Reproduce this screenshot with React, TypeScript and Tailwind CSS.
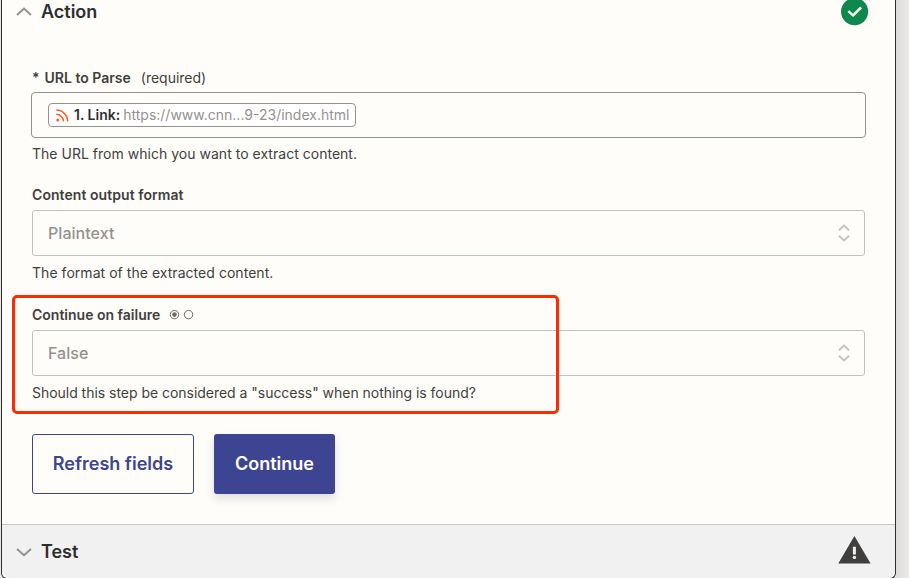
import type { ReactNode } from "react";

function Chevron({ up = false }: { up?: boolean }) {
  return (
    <svg width="16" height="10" viewBox="0 0 16 10" fill="none" stroke="#95928e" strokeWidth="2">
      <path d={up ? "M1 8 8 1.6l7 6.4" : "M1 2.1 8 8.2l7-6.1"} />
    </svg>
  );
}

function Help({ children }: { children: ReactNode }) {
  return <p className="h-5 text-[14px] leading-5 text-[#403f3e]">{children}</p>;
}

function SelectBox({ value }: { value: string }) {
  return (
    <div className="flex h-[46px] w-[833px] items-center justify-between rounded-[3px] border border-[#c4c2be] pl-[15px] pr-[14px] text-[16px] font-medium text-[#95928e]">
      <span className="tracking-[0.04px]">{value}</span>
      <svg width="12" height="18" viewBox="0 0 12 18" fill="none" stroke="#c7c5c1" strokeWidth="2">
        <path d="M1 6.2 6 1.6l5 4.6M1 11.8l5 4.6 5-4.6" />
      </svg>
    </div>
  );
}

export default function App() {
  return (
    <div className="relative h-[578px] w-[909px] overflow-hidden bg-[#e8e7e4] pl-px font-['Inter',sans-serif]">
      <div className="absolute left-[896px] top-0 h-full w-[13px] bg-linear-to-r from-[#dddcd9] to-[#ebeae9]" />
      <main className="flex h-[579px] w-[895px] flex-col overflow-hidden rounded-b-[6px] border-x border-b border-[#2d2e2e] bg-[#fffdf9]">
        <header className="flex h-6 shrink-0 items-center pl-[14px] pr-[26px]">
          <Chevron up />
          <h2 className="ml-[9px] text-[18px] font-semibold leading-6 text-[#2d2e2e]">Action</h2>
          <svg className="ml-auto" width="28" height="28" viewBox="0 0 28 28">
            <circle cx="13.6" cy="13.6" r="13.6" fill="#0f884e" />
            <path d="m7.3 13.1 4.8 4.3 8-7.9" fill="none" stroke="#fffdf9" strokeWidth="2.5" />
          </svg>
        </header>

        <section className="flex h-[500px] shrink-0 flex-col pl-[30px] pt-[44px]">
          <div className="flex h-5 items-center text-[14px] leading-5 text-[#403f3e]">
            <span className="font-semibold">*</span>
            <span className="ml-[5px] font-semibold">URL to Parse</span>
            <span className="ml-[10px]">(required)</span>
          </div>
          <div className="-ml-px mt-[4px] flex h-[46px] w-[835px] items-center rounded-[4px] border border-[#95928e] pl-4">
            <div className="flex h-6 w-[308px] items-center whitespace-nowrap rounded-[4px] border border-[#95928e] bg-white pl-[7px] text-[14px]">
              <svg width="13" height="13" viewBox="0 0 13 13" fill="none" stroke="#ff5a1f" strokeWidth="1.5">
                <path d="M.3 1.1a11.4 11.4 0 0 1 11.4 11.4M.3 5.3a7.2 7.2 0 0 1 7.2 7.2" />
                <circle cx="1.8" cy="11" r="1.5" fill="#ff5a1f" stroke="none" />
              </svg>
              <span className="mb-px ml-[5px] font-semibold text-[#2d2e2e]">1. Link:</span>
              <span className="mb-px ml-[3px] text-[#95928e]">https://www.cnn...9-23/index.html</span>
            </div>
          </div>
          <div className="mt-[6px] tracking-[0.02px]"><Help>The URL from which you want to extract content.</Help></div>

          <div className="mt-[21px] h-5 text-[14px] font-semibold leading-5 tracking-[0.06px] text-[#403f3e]">Content output format</div>
          <div className="mt-[5px]"><SelectBox value="Plaintext" /></div>
          <div className="mt-[7px] tracking-[0.04px]"><Help>The format of the extracted content.</Help></div>

          <div className="mt-[22px] flex h-5 items-center text-[14px] font-semibold leading-5 text-[#403f3e]">
            Continue on failure
            <svg className="ml-[9px]" width="25" height="10" viewBox="0 0 25 10" fill="none" stroke="#6b6a68">
              <circle cx="5.5" cy="4.6" r="4.2" />
              <circle cx="5.5" cy="4.6" r="2.3" fill="#6b6a68" stroke="none" />
              <circle cx="19.5" cy="4.6" r="4.2" />
            </svg>
          </div>
          <div className="mt-[5px]"><SelectBox value="False" /></div>
          <div className="mt-[7px] tracking-[-0.03px]"><Help>Should this step be considered a "success" when nothing is found?</Help></div>

          <div className="mt-[31px] flex gap-5 text-[18px] font-semibold">
            <button className="h-[60px] w-[162px] rounded-[3px] border border-[#3d4592] pb-0.5 text-[#3d4592]">Refresh fields</button>
            <button className="h-[60px] w-[121px] rounded-[3px] bg-[#3d4592] pb-0.5 text-[#fffdf9] shadow-[0_5px_10px_rgba(45,46,46,0.14)]">Continue</button>
          </div>
        </section>

        <footer className="flex grow items-center rounded-b-[8px] border-t border-[#c9c8c5] bg-[#f1f1f1] pl-[14px] pr-[24px]">
          <Chevron />
          <h2 className="ml-[9px] text-[18px] font-semibold text-[#2d2e2e]">Test</h2>
          <svg className="mb-[3px] ml-auto" width="33" height="28" viewBox="0 0 33 28">
            <path d="M16.4 0 32.6 27.5H.3z" fill="#403f3e" />
            <path d="M14.9 10.8h3v7.6h-3z" fill="#f1f1f1" />
            <circle cx="16.4" cy="21.4" r="1.7" fill="#f1f1f1" />
          </svg>
        </footer>
      </main>
      <div className="absolute left-[12px] top-[294.5px] h-[119px] w-[547px] rounded-[5px] border-3 border-[#ff2807]" />
    </div>
  );
}
